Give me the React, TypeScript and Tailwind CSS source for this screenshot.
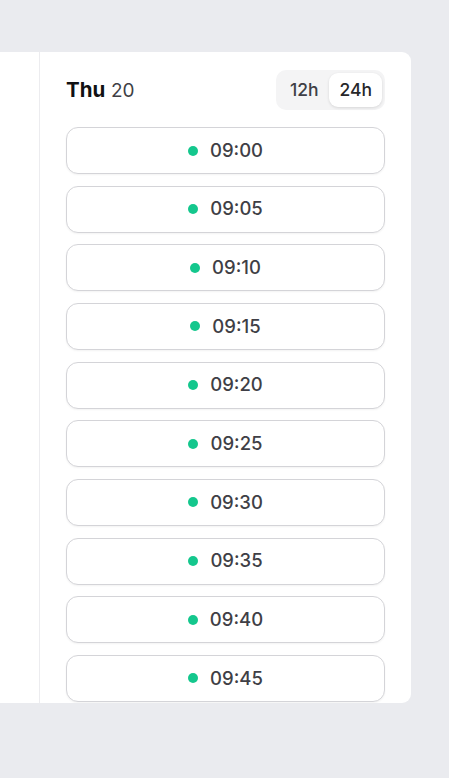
import { useState } from 'react';

const slots = ['09:00', '09:05', '09:10', '09:15', '09:20', '09:25', '09:30', '09:35', '09:40', '09:45'];

export default function App() {
  const [format, setFormat] = useState<'12h' | '24h'>('24h');

  return (
    <div className="min-h-screen bg-[#eaebef] pt-[52px]" style={{ fontFamily: 'Inter, "Noto Sans", sans-serif' }}>
      <div className="flex h-[651px] w-[411px] overflow-hidden rounded-r-[9px] bg-white">
        <div className="w-[40px] shrink-0 border-r border-[#ececef]" />
        <div className="flex flex-1 flex-col overflow-hidden pl-[26px] pr-[26px] pt-[18px]">
          <div className="flex items-center justify-between">
            <h2 className="text-[20.5px] leading-none text-[#111113]">
              <span className="font-bold">Thu</span>{' '}
              <span className="text-[19px] text-[#3f3f46]">20</span>
            </h2>
            <div className="flex rounded-[10px] bg-[#f4f4f5] p-[3px]">
              {(['12h', '24h'] as const).map((f) => (
                <button
                  key={f}
                  onClick={() => setFormat(f)}
                  className={
                    f === format
                      ? 'h-[34px] rounded-[9px] bg-white px-[10px] text-[17.5px] font-medium text-[#27272a] shadow-[0_1px_3px_rgba(0,0,0,0.12)]'
                      : 'h-[34px] rounded-[9px] px-[11px] text-[17.5px] font-medium text-[#3f3f46]'
                  }
                >
                  {f}
                </button>
              ))}
            </div>
          </div>
          <div className="mt-[17px] flex flex-col gap-[11.67px]">
            {slots.map((t) => (
              <button
                key={t}
                className="flex h-[47px] shrink-0 items-center justify-center gap-[12px] rounded-[12px] border border-[#d4d4d8] bg-white shadow-[0_1px_2px_rgba(0,0,0,0.05)]"
              >
                <span className="h-[10px] w-[10px] rounded-full bg-[#14c78d]" />
                <span className="text-[18.5px] font-medium text-[#3f3f46]">{t}</span>
              </button>
            ))}
          </div>
        </div>
      </div>
    </div>
  );
}
